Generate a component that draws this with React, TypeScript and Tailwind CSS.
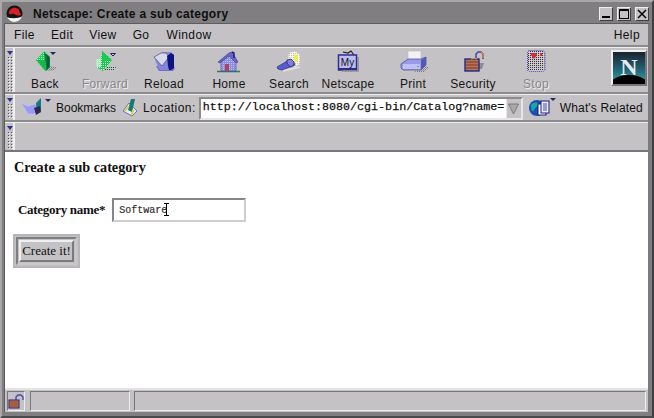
import React from "react";

const Grip = ({ h }: { h: number }) => (
  <div className="w-[10px] shrink-0 self-stretch border-r-2 border-r-[#f0eff0] bg-[#c4c2c5] relative">
    <svg width="9" height={h} className="block" shapeRendering="crispEdges">
      <defs>
        <pattern id={`gr${h}`} width="3" height="3" patternUnits="userSpaceOnUse">
          <rect width="1" height="1" fill="#55555c" />
          <rect x="1" y="1" width="1" height="1" fill="#f4f4f4" />
        </pattern>
      </defs>
      <path d="M2 3h6l-3 4z" fill="#2e2f8a" shapeRendering="auto" />
      <rect x="3" y="9" width="5" height={h - 10} fill={`url(#gr${h})`} />
    </svg>
  </div>
);

const Drop = ({ c = "#24265e" }: { c?: string }) => <path d="M0 0h6l-3 3z" fill={c} />;

const Defs = () => (
  <svg width="0" height="0" className="absolute">
    <defs>
      <pattern id="gck" width="2" height="2" patternUnits="userSpaceOnUse">
        <rect width="2" height="2" fill="#18d84c" />
        <rect width="1" height="1" fill="#c4f8cc" />
      </pattern>
      <pattern id="gdis" width="2" height="2" patternUnits="userSpaceOnUse">
        <rect width="2" height="2" fill="#18c850" />
        <rect width="1" height="1" fill="#e8f8e8" />
      </pattern>
      <pattern id="gdk" width="2" height="2" patternUnits="userSpaceOnUse">
        <rect width="1" height="1" fill="#0d5f30" />
        <rect x="1" y="1" width="1" height="1" fill="#c4c2c5" />
      </pattern>
      <pattern id="shd" width="2" height="2" patternUnits="userSpaceOnUse">
        <rect width="1" height="1" fill="#77767a" />
        <rect x="1" y="1" width="1" height="1" fill="#96959a" />
      </pattern>
      <pattern id="stp" width="2" height="2" patternUnits="userSpaceOnUse">
        <rect width="1" height="1" fill="#1a1a1a" />
        <rect x="1" y="1" width="1" height="1" fill="#d8d6da" />
      </pattern>
      <pattern id="blu" width="2" height="2" patternUnits="userSpaceOnUse">
        <rect width="2" height="2" fill="#8e8fe4" />
        <rect width="1" height="1" fill="#c0c0f4" />
      </pattern>
      <pattern id="lit" width="2" height="2" patternUnits="userSpaceOnUse">
        <rect width="2" height="2" fill="#f4f3ec" />
        <rect width="1" height="1" fill="#c4c2c5" />
      </pattern>
    </defs>
  </svg>
);

const Ic = ({ children }: { children: React.ReactNode }) => (
  <svg width="40" height="24" viewBox="0 0 40 24" className="block">{children}</svg>
);

const Back = () => (
  <Ic>
    <path d="M17 20l7 2 6-1 1-3-8-1z" fill="url(#shd)" />
    <path d="M19 2 11 11l9 11 4-3V7z" fill="url(#gck)" />
    <path d="M19 3l6 5v10l-4 4-1-11z" fill="#0d7a3e" />
    <path d="M22 6l2 2v9l-2 3z" fill="#0a5a34" />
    <path d="M11 11l9 0 1 11z" fill="#14b84c" />
    <g transform="translate(25 3)"><Drop /></g>
  </Ic>
);
const Forward = () => (
  <Ic>
    <path d="M13 19l5 3 11-1 2-3-15-1z" fill="url(#gdk)" />
    <path d="M17 2l10 9-9 11-7-4v-8l5-1z" fill="url(#gdis)" />
    <path d="M17 2l10 9-9 2z" fill="#19cc50" />
    <path d="M11 10l5-1v9h-5z" fill="#dff3e0" opacity=".75" />
    <path d="M25.5 4.5h5l-2.500 2.500z" fill="none" stroke="#24265e" strokeWidth="1" />
  </Ic>
);
const Reload = () => (
  <Ic>
    <path d="M12 17h17l2 2-2 3H15z" fill="#6f70d0" />
    <path d="M10 8l9-5h8l3 3v13l-3 2H16l-2-3z" fill="#8586d8" />
    <path d="M10 8l8 9 7-9-3-4h-5z" fill="#d8d8e6" stroke="#5b5e98" strokeWidth=".8" />
    <path d="M23 7l4-3 3 2v13l-3 2h-2l-1-4z" fill="#0c1480" />
  </Ic>
);
const Home = () => (
  <Ic>
    <path d="M8 22.500h23" stroke="#2f7f50" strokeWidth="1.500" />
    <path d="M12 13v9h15v-9l-7-7z" fill="url(#blu)" stroke="#4a4ba0" strokeWidth=".7" />
    <path d="M9 13 20 4l3-1 6 10-2 1-7-7-9 7z" fill="#6566c4" stroke="#3c3d8c" strokeWidth=".6" />
    <rect x="16" y="15" width="4" height="7" fill="#a8465a" />
    <path d="M23 3l2 1v5" stroke="#20226e" strokeWidth="1.500" fill="none" />
  </Ic>
);
const Search = () => (
  <Ic>
    <path d="M20 4l6-2 5 4v9l-5 3-7-6z" fill="url(#lit)" />
    <path d="M25 5l4 2v4l-3 3-1-4z" fill="#f2f040" />
    <path d="M8 18l12-7 4 1 2 4-13 5-4-1z" fill="#5a5ccc" stroke="#2a2b80" strokeWidth=".7" />
    <path d="M18 11l4-1 3 3 0 3-4 2-3-4z" fill="#7f80e0" stroke="#24256e" strokeWidth=".8" />
    <path d="M14 22l17-4" stroke="#e4e3e4" strokeWidth="1.500" />
  </Ic>
);
const MyNs = () => (
  <Ic>
    <path d="M15 3l5 1 3-2 3 4" stroke="#222" strokeWidth="1.200" fill="none" />
    <rect x="10.500" y="6" width="18" height="15" fill="#bdbdf2" stroke="#2e2f96" strokeWidth="1.500" />
    <path d="M11 20h18" stroke="#2b2c8a" strokeWidth="2" />
    <path d="M30 8v14H14" stroke="#8d8c90" strokeWidth="1.500" fill="none" />
    <text x="19.500" y="16.500" textAnchor="middle" fontSize="10" fontFamily="'Liberation Sans',sans-serif" fill="#111">My</text>
  </Ic>
);
const Print = () => (
  <Ic>
    <path d="M28 21l6-4 2 2-5 4H20z" fill="url(#shd)" />
    <rect x="15" y="2" width="13" height="9" fill="#f2f2f4" stroke="#b8b8bc" strokeWidth=".6" />
    <path d="M8 15l7-5h13l5-2v8l-5 5H10l-2-2z" fill="#9a9be6" stroke="#44459a" strokeWidth=".7" />
    <path d="M10 15h17v5H10z" fill="#c0c1f2" />
    <path d="M28 11l5-3v8l-5 5z" fill="#5657b4" />
    <rect x="24" y="17" width="2" height="1" fill="#2ecc4a" />
  </Ic>
);
const Security = () => (
  <Ic>
    <path d="M26 14h5l-2 6h-3z" fill="#8f8e94" />
    <path d="M23 11V5l2-2h3l2 2v5" fill="none" stroke="#4446a8" strokeWidth="1.500" />
    <path d="M28 3l2 2v4" fill="none" stroke="#d08050" strokeWidth="1.500" />
    <rect x="12" y="10" width="14" height="12" fill="#b07850" stroke="#25268a" strokeWidth="1.400" />
    <path d="M13 13h12M13 16h12M13 19h12" stroke="#8c2f3a" strokeWidth="1.200" />
    <path d="M18 10l3-1 3 1" stroke="#d8b03a" fill="none" />
  </Ic>
);
const Stop = () => (
  <Ic>
    <rect x="12" y="2" width="16" height="20" rx="2" fill="url(#stp)" opacity=".85" />
    <rect x="11.500" y="1.500" width="17" height="21" rx="2" fill="none" stroke="#4a4cc0" strokeWidth="1" strokeDasharray="1 1" />
    <path d="M15 4h5l1 2-3 4-3-4z" fill="#d8283a" />
    <path d="M24 4h2v3h-2z" fill="#d8283a" />
    <path d="M29.500 4v18" stroke="#8f8e94" strokeDasharray="1 1" />
  </Ic>
);

const Logo = () => (
  <svg width="17" height="17" viewBox="0 0 18 18" className="block">
    <circle cx="9" cy="9" r="8.500" fill="#141414" />
    <path d="M1 13c3 1 11 2 16-1-1 4-5 6-8 6s-6-2-8-5z" fill="#f3f3f3" />
    <path d="M3 9c0-4 4-7 7-6 1 0 1 1 3 1 1 1 1 2 1 3l2 3c-1 2-6 1-8-1-2 1-4 1-5 0z" fill="#d81f26" />
  </svg>
);

const NLogo = () => (
  <div className="w-[36px] h-[36px] border-2 border-t-[#f0eff0] border-l-[#f0eff0] border-r-[#77757a] border-b-[#77757a] shrink-0">
    <div className="relative w-[32px] h-[32px] overflow-hidden bg-gradient-to-b from-[#18222e] via-[#1f5f70] to-[#3aa8a8]">
      <div className="absolute left-[-8px] top-[23px] w-[48px] h-[36px] rounded-[50%] bg-black" />
      <span className="absolute inset-0 text-center text-[#e4eaf4] font-bold text-[24px] leading-[30px] font-['Liberation_Serif',serif]">N</span>
    </div>
  </div>
);

const items = [
  { n: "Back", w: "w-[60px]", i: <Back /> },
  { n: "Forward", w: "w-[60px]", i: <Forward />, d: true },
  { n: "Reload", w: "w-[58px]", i: <Reload /> },
  { n: "Home", w: "w-[72px]", i: <Home /> },
  { n: "Search", w: "w-[48px]", i: <Search /> },
  { n: "Netscape", w: "w-[70px]", i: <MyNs /> },
  { n: "Print", w: "w-[60px]", i: <Print /> },
  { n: "Security", w: "w-[60px]", i: <Security /> },
  { n: "Stop", w: "w-[66px]", i: <Stop />, d: true },
];

const Menu = ({ t, cls }: { t: string; cls: string }) => <span className={cls}>{t}</span>;

const WinBtn = ({ children }: { children: React.ReactNode }) => (
  <div className="w-[14px] h-[14px] bg-[#c4c2c5] border border-t-[#eeeeee] border-l-[#eeeeee] border-r-[#3f3f42] border-b-[#3f3f42] flex items-center justify-center">
    {children}
  </div>
);

export default function App() {
  return (
    <div className="w-[654px] h-[418px] overflow-hidden flex flex-col bg-[#807e81] border-2 border-t-[#a9a7aa] border-l-[#a9a7aa] border-r-[#3f3e40] border-b-[#4a494b] font-['Liberation_Sans',sans-serif] text-[#111]">
      {/* title bar */}
      <div className="h-[21px] shrink-0 flex items-center pl-[4px] pr-[3px] pt-[2px]">
        <Logo />
        <span className="ml-[10px] font-bold text-[12px] tracking-[0.3px] text-[#0e0e0e]">Netscape: Create a sub category</span>
        <div className="ml-auto flex gap-[4px]">
          <WinBtn><div className="w-[8px] h-[2px] bg-black mt-[7px]" /></WinBtn>
          <WinBtn><div className="w-[10px] h-[10px] border border-t-2 border-black" /></WinBtn>
          <WinBtn>
            <svg width="10" height="10" viewBox="0 0 10 10"><path d="M1 1l8 8M9 1L1 9" stroke="#000" strokeWidth="1.500" /></svg>
          </WinBtn>
        </div>
      </div>
      {/* inner window */}
      <div className="flex-1 min-h-0 mx-[2px] mb-[4px] flex flex-col bg-[#c4c2c5] border-l border-t border-r-2 border-l-[#5d5c5f] border-t-[#5d5c5f] border-r-[#7a797c]">
        {/* menu */}
        <div className="h-[23px] shrink-0 flex items-center text-[12px] tracking-[0.4px] border-b-2 border-b-[#8b8a8d] pl-[9px] pr-[8px] pt-[1px]">
          <Menu t="File" cls="mr-[16px]" />
          <Menu t="Edit" cls="mr-[16px]" />
          <Menu t="View" cls="mr-[16px]" />
          <Menu t="Go" cls="mr-[17px]" />
          <Menu t="Window" cls="" />
          <Menu t="Help" cls="ml-auto" />
        </div>
        {/* toolbar */}
        <div className="h-[47px] shrink-0 flex border-b-2 border-b-[#8b8a8d] border-t border-t-[#f0eff0]">
          <Grip h={45} />
          <div className="flex flex-1 pt-[1px]">
            {items.map((it) => (
              <div key={it.n} className={`${it.w} flex flex-col items-center shrink-0`}>
                {it.i}
                <span className={it.d ? "mt-[4px] text-[12px] leading-[14px] tracking-[0.3px] text-[#8a888c] [text-shadow:1px_1px_0_#efefef]" : "mt-[4px] text-[12px] leading-[14px] tracking-[0.3px] text-[#161616]"}>{it.n}</span>
              </div>
            ))}
            <div className="ml-[42px] mt-[1px]"><NLogo /></div>
          </div>
        </div>
        {/* location */}
        <div className="h-[28px] shrink-0 flex border-b-2 border-b-[#8b8a8d] border-t border-t-[#f0eff0]">
          <Grip h={25} />
          <div className="flex flex-1 items-center min-w-0 pt-[1px]">
            <svg width="36" height="24" viewBox="0 0 36 24" className="ml-[4px] shrink-0">
              <path d="M2 7l7 3 8-2 1 8-3 2H9z" fill="#9a9bf0" stroke="#c8c8f8" strokeWidth=".6" />
              <path d="M17 7l5-5v12l-4 4z" fill="#157a80" />
              <path d="M15 12l6-2 1 6-5 3z" fill="#2a2b55" />
              <g transform="translate(26 3)"><Drop /></g>
            </svg>
            <span className="text-[12px] tracking-[0px] ml-[1px] w-[60px] shrink-0">Bookmarks</span>
            <svg width="18" height="20" viewBox="0 0 18 20" className="ml-[6px] shrink-0">
              <path d="M1 13l6-8 8 8-5 5z" fill="#e8e8fa" stroke="#5557b0" strokeWidth=".8" />
              <path d="M6 12l3-11h4l-3 13z" fill="#137a70" />
              <path d="M3 13l4-5M12 12l-3 5" stroke="#e0d020" strokeWidth="1.500" />
            </svg>
            <span className="text-[12px] tracking-[0.45px] ml-[3px]">Location:</span>
            <div className="ml-[3px] w-[324px] h-[23px] flex border-2 border-t-[#8c8b8e] border-l-[#8c8b8e] border-r-[#e6e5e7] border-b-[#e6e5e7] shrink-0">
              <div className="relative flex-1 flex items-center bg-white overflow-hidden pl-[2px]">
                <span className="font-['Liberation_Mono',monospace] text-[11.7px] whitespace-nowrap text-[#111] [-webkit-text-stroke:0.25px_#111]">http://localhost:8080/cgi-bin/Catalog?name=</span>
              </div>
              <div className="w-[15px] bg-[#c4c2c5] flex items-center justify-center border-l border-l-[#e6e5e7] shrink-0">
                <svg width="13" height="13" viewBox="0 0 13 13"><path d="M1.500 2h10l-5 10z" fill="#a9a8ab" stroke="#7c7b7e" strokeWidth="1" /></svg>
              </div>
            </div>
            <svg width="28" height="22" viewBox="0 0 28 22" className="ml-[5px] shrink-0">
              <circle cx="9" cy="11" r="8" fill="#1a4fb0" />
              <path d="M3 8c3-3 6-3 7-1s-3 3-4 6-3 1-3-5zM10 14l3 1-2 4z" fill="#17a8a8" />
              <rect x="10" y="7" width="8" height="11" fill="#fff" stroke="#1e1f7a" />
              <rect x="13" y="4" width="8" height="12" fill="#e8e8f8" stroke="#1e1f7a" />
              <path d="M15 7h4M15 9h4M15 11h4M15 13h4" stroke="#2a2a80" strokeWidth=".8" />
              <g transform="translate(22 1)"><Drop /></g>
            </svg>
            <span className="text-[12px] tracking-[0.15px] ml-[4px] whitespace-nowrap">What's Related</span>
          </div>
        </div>
        {/* personal bar */}
        <div className="h-[30px] shrink-0 flex border-t border-t-[#f0eff0] border-b-2 border-b-[#77767a]">
          <Grip h={27} />
        </div>
        {/* page */}
        <div className="flex-1 min-h-0 bg-white font-['Liberation_Serif',serif] text-[#111] pl-[9px]">
          <h1 className="mt-[7px] font-bold text-[14.2px] leading-[16px]">Create a sub category</h1>
          <div className="mt-[23px] flex items-center pl-[4px]">
            <span className="font-bold text-[13px] tracking-[-0.3px]">Category name*</span>
            <div className="relative ml-[7px] w-[134px] h-[24px] border-2 border-t-[#858487] border-l-[#858487] border-r-[#cfcdd0] border-b-[#cfcdd0] flex items-center pl-[5px] bg-white">
              <span className="font-['Liberation_Mono',monospace] text-[10px] text-[#333] [-webkit-text-stroke:0.2px_#333]">Software</span>
              <svg width="7" height="13" viewBox="0 0 7 13" className="absolute left-[49px] top-[3px]"><path d="M1 .5h5M3.500.5v12M1 12.500h5" stroke="#000" strokeWidth="1" fill="none" /></svg>
            </div>
          </div>
          <div className="mt-[12px] w-[67px] h-[34px] border-2 border-[#b8b6b9] bg-[#c4c2c5] p-[1px] -ml-px">
            <div className="w-full h-full border-2 border-t-[#7e7d80] border-l-[#7e7d80] border-r-[#c9c7ca] border-b-[#c9c7ca] bg-[#c4c2c5] p-[1px]">
              <button className="w-full h-[22px] bg-[#c4c2c5] border-2 border-t-[#efeef0] border-l-[#efeef0] border-r-[#7a797c] border-b-[#7a797c] flex items-center justify-center text-[13px] leading-[15px] pb-[1px] whitespace-nowrap">Create it!</button>
            </div>
          </div>
        </div>
        {/* status */}
        <div className="h-[24px] shrink-0 flex items-center pl-[2px] pr-[2px] border-t-2 border-t-[#e4e3e5] bg-[#c4c2c5]">
          <div className="w-[18px] h-[20px] border border-t-[#77767a] border-l-[#77767a] border-r-[#eeeeee] border-b-[#eeeeee] flex items-center justify-center">
            <svg width="16" height="15" viewBox="0 0 16 15">
              <path d="M8 6V3l2-2h3l2 2v3" fill="none" stroke="#4446a8" strokeWidth="1.300" />
              <rect x="1" y="6" width="10" height="8" fill="#c08a4a" stroke="#1d1e80" />
              <path d="M2 8h8M2 10h8M2 12h8" stroke="#9a2a35" />
            </svg>
          </div>
          <div className="ml-[5px] w-[100px] h-[20px] border border-t-[#77767a] border-l-[#77767a] border-r-[#eeeeee] border-b-[#eeeeee]" />
          <div className="ml-[4px] flex-1 h-[20px] border border-t-[#77767a] border-l-[#77767a] border-r-[#eeeeee] border-b-[#eeeeee]" />
        </div>
      </div>
      <Defs />
    </div>
  );
}
